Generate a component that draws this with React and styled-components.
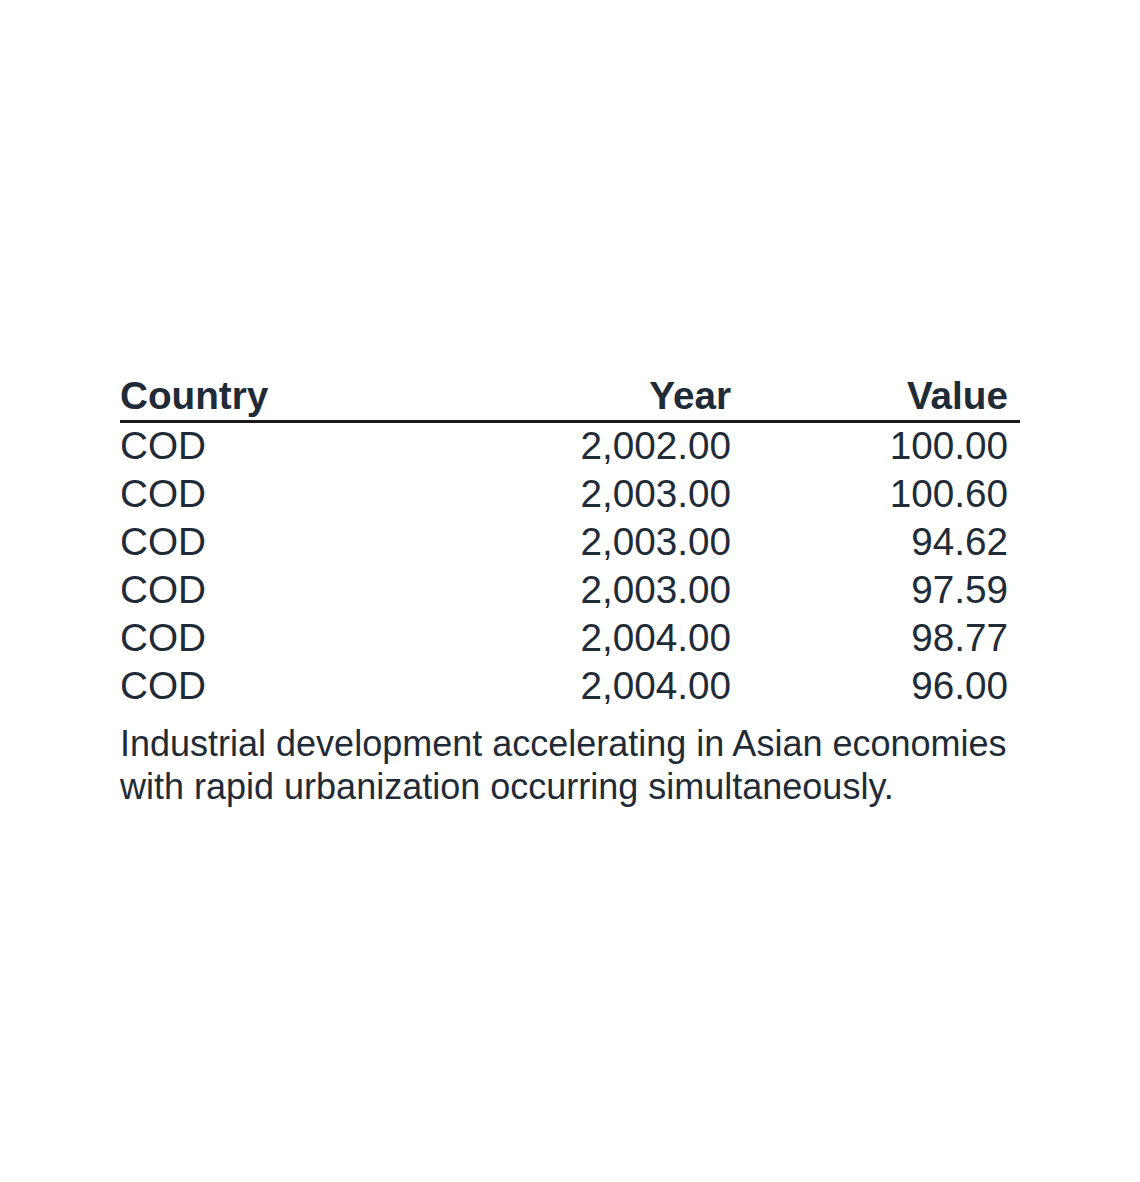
import React from "react";
import styled, { createGlobalStyle } from "styled-components";

const GlobalStyle = createGlobalStyle`
  html, body {
    margin: 0;
    padding: 0;
    background: #ffffff;
  }
  body {
    font-family: "Liberation Sans", Arial, sans-serif;
    color: #1f2b37;
  }
`;

const Page = styled.div`
  width: 1140px;
  height: 1182px;
  box-sizing: border-box;
  padding-top: 374px;
  display: flex;
  justify-content: center;
  align-items: flex-start;
`;

const Figure = styled.div`
  width: 900px;
  display: flex;
  flex-direction: column;
`;

const Table = styled.table`
  width: 100%;
  border-collapse: collapse;
  table-layout: fixed;
`;

const HeadCell = styled.th`
  font-size: 38.7px;
  font-weight: 700;
  line-height: 44px;
  padding: 0 ${(p) => (p.$num ? "12px" : "0")} 2px 0;
  text-align: ${(p) => (p.$num ? "right" : "left")};
  border-bottom: 3px solid #1a1a1a;
`;

const Cell = styled.td`
  font-size: 38.7px;
  line-height: 44px;
  padding: 1px ${(p) => (p.$num ? "12px" : "0")} 3px 0;
  text-align: ${(p) => (p.$num ? "right" : "left")};
  white-space: nowrap;
`;

const Caption = styled.p`
  margin: 11px 0 0;
  font-size: 36px;
  line-height: 1.2;
`;

const rows = [
  { country: "COD", year: 2002, value: 100 },
  { country: "COD", year: 2003, value: 100.6 },
  { country: "COD", year: 2003, value: 94.62 },
  { country: "COD", year: 2003, value: 97.59 },
  { country: "COD", year: 2004, value: 98.77 },
  { country: "COD", year: 2004, value: 96 },
];

const fmt = (n) =>
  n.toLocaleString("en-US", {
    minimumFractionDigits: 2,
    maximumFractionDigits: 2,
  });

const App = () => {
  return (
    <>
      <GlobalStyle />
      <Page>
        <Figure>
          <Table>
            <colgroup>
              <col style={{ width: 399 }} />
              <col style={{ width: 224 }} />
              <col style={{ width: 277 }} />
            </colgroup>
            <thead>
              <tr>
                <HeadCell>Country</HeadCell>
                <HeadCell $num>Year</HeadCell>
                <HeadCell $num>Value</HeadCell>
              </tr>
            </thead>
            <tbody>
              {rows.map((r, i) => (
                <tr key={i}>
                  <Cell>{r.country}</Cell>
                  <Cell $num>{fmt(r.year)}</Cell>
                  <Cell $num>{fmt(r.value)}</Cell>
                </tr>
              ))}
            </tbody>
          </Table>
          <Caption>
            Industrial development accelerating in Asian economies with rapid
            urbanization occurring simultaneously.
          </Caption>
        </Figure>
      </Page>
    </>
  );
};

export default App;
